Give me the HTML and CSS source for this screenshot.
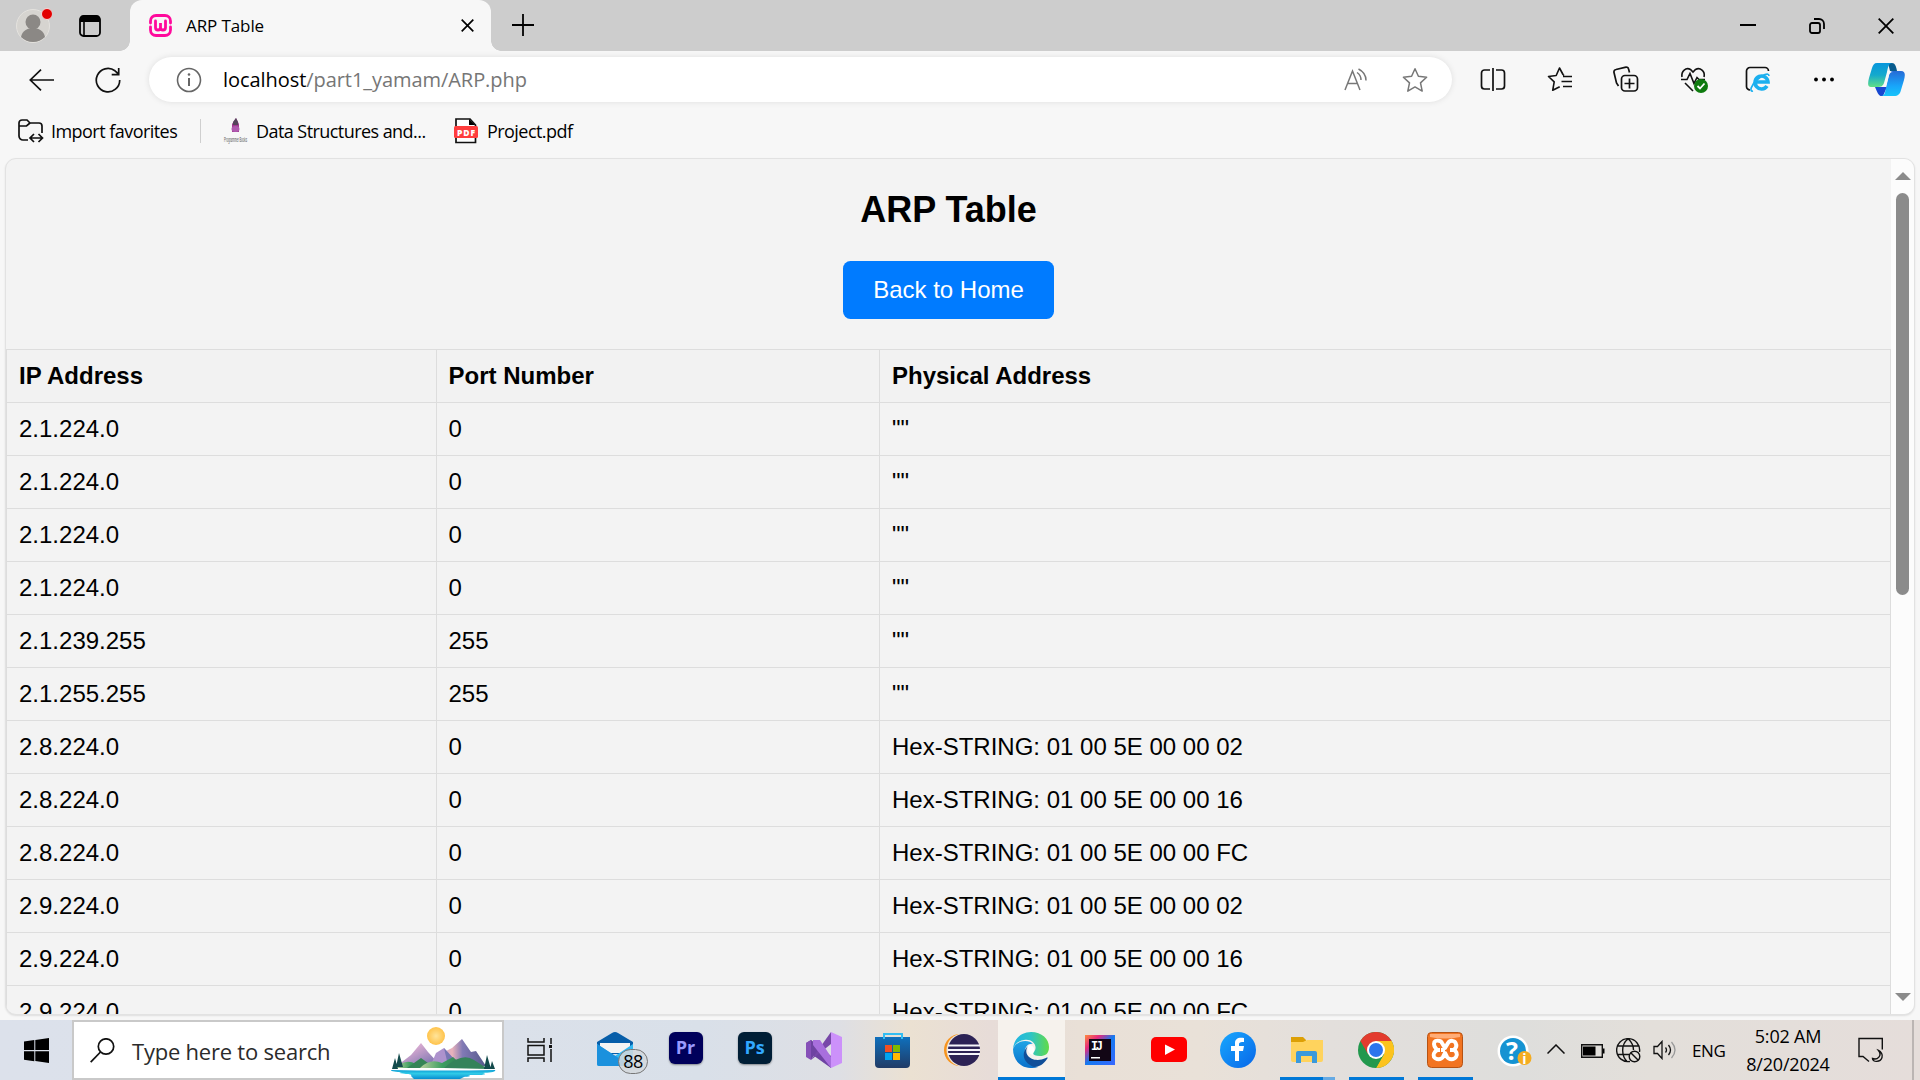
FILE: index.html
```
<!DOCTYPE html>
<html lang="en">
<head>
<meta charset="utf-8">
<title>ARP Table</title>
<link rel="stylesheet" href="styles.css">
</head>
<body>
<div class="screen">
  <header class="titlebar">
    <svg class="profile" width="36" height="38" viewBox="0 0 36 38"><circle cx="17" cy="20" r="16.5" fill="#d6d4d0" stroke="#e4e2de"/><circle cx="17" cy="16" r="7.5" fill="#8b8885"/><path d="M5 31c2-12 22-12 24 0a17 17 0 0 1-24 0z" fill="#8b8885"/><circle cx="31" cy="8" r="5.5" fill="#e30000" stroke="#f3dada"/></svg>
    <svg class="tabactions" width="22" height="22" viewBox="0 0 22 22"><rect x="1" y="1" width="20" height="20" rx="3.5" fill="none" stroke="#000" stroke-width="1.8"/><path d="M1 7V4a3 3 0 0 1 3-3h14a3 3 0 0 1 3 3v3z"/><path d="M5 7v14" stroke="#000" stroke-width="1.6"/></svg>
    <div class="tab">
      <svg width="23" height="23" viewBox="0 0 23 23" fill="none" stroke="#ff0a9c" stroke-linecap="round"><path d="M1.500 9V7a5.500 5.500 0 0 1 5.500-5.500h9A5.500 5.500 0 0 1 21.500 7v2M1.500 13v3A5.500 5.500 0 0 0 7 21.500h9a5.500 5.500 0 0 0 5.500-5.500v-3" stroke-width="2.800"/><path d="M6.500 7v6.500a2.500 2.500 0 0 0 5 0V9v4.500a2.500 2.500 0 0 0 5 0V7" stroke-width="2.800"/></svg>
      <span class="tab-title">ARP Table</span>
      <svg width="13" height="13" viewBox="0 0 13 13" stroke="#000" stroke-width="1.7"><path d="M.7.7l11.600 11.600M12.300.7L.7 12.300"/></svg>
    </div>
    <svg class="newtab" width="22" height="22" viewBox="0 0 22 22" stroke="#000" stroke-width="1.8"><path d="M11 0v22M0 11h22"/></svg>
    <div class="window-buttons">
      <svg width="16" height="16" viewBox="0 0 16 16" stroke="#000" stroke-width="2"><path d="M0 7h16"/></svg>
      <svg width="16" height="16" viewBox="0 0 16 16" fill="none" stroke="#000" stroke-width="1.8"><rect x="1" y="5" width="10" height="10" rx="2"/><path d="M5 1h5a5 5 0 0 1 5 5v5"/></svg>
      <svg width="16" height="16" viewBox="0 0 16 16" stroke="#000" stroke-width="1.8"><path d="M.7.7l14.600 14.600M15.300.7L.7 15.300"/></svg>
    </div>
  </header>

  <nav class="toolbar">
    <svg class="back" width="25" height="22" viewBox="0 0 25 22" fill="none" stroke="#111" stroke-width="1.7"><path d="M25 11H1.500M12 .7L1.300 11 12 21.300"/></svg>
    <svg class="reload" width="26" height="26" viewBox="0 0 26 26" fill="none" stroke="#111" stroke-width="1.7"><path d="M24.700 13A11.700 11.700 0 1 1 20 3.800l3 2.700M23.700 1v6.700h-7"/></svg>
    <div class="address">
      <svg class="info" width="26" height="26" viewBox="0 0 26 26" fill="none" stroke="#666" stroke-width="1.6"><circle cx="13" cy="13" r="11.500"/><path d="M13 11v8" stroke-width="2"/><circle cx="13" cy="7.500" r="1.300" fill="#666" stroke="none"/></svg>
      <span class="url">localhost<span class="path">/part1_yamam/ARP.php</span></span>
      <svg class="read" width="24" height="24" viewBox="0 0 24 24" fill="none" stroke="#777" stroke-width="1.500"><path d="M1 22L8.500 3 16 22M3.800 15.500h9.600M13 4.500c3 2 4 4.500 4 7.500M14.500 1c5 2.500 7.500 6.500 7.500 11.500"/></svg>
      <svg class="star" width="26" height="26" viewBox="0 0 26 26" fill="none" stroke="#777" stroke-width="1.500" stroke-linejoin="round"><path d="M13 1.700l3.400 7.600 8.200 1-6.100 5.600 1.700 8.200-7.200-4.200-7.200 4.200 1.700-8.200-6.100-5.600 8.200-1z"/></svg>
    </div>
    <div class="tools">
      <svg width="26" height="28" viewBox="0 0 26 28" fill="none" stroke="#111" stroke-width="1.700"><path d="M10 4H4.500A3 3 0 0 0 1.500 7v13a3 3 0 0 0 3 3H10M16 4h5.500a3 3 0 0 1 3 3v13a3 3 0 0 1-3 3H16M13 2v23"/></svg>
      <svg width="26" height="28" viewBox="0 0 26 28" fill="none" stroke="#111" stroke-width="1.600" stroke-linejoin="round"><path d="M17 9.500l-1-1L12.500 2 9.200 9.500l-7.700 1 5.700 5.300-1.500 8.500 7-3.500M16 10.500h9M14.500 15.500H25M16 20.500h9"/></svg>
      <svg width="26" height="28" viewBox="0 0 26 28" fill="none" stroke="#111" stroke-width="1.700"><rect x="8.500" y="9.500" width="16" height="15.500" rx="3.500"/><path d="M16.500 12.500v10M11.500 17.500h10M5.500 20L3.500 17 1 6.500a2.500 2.500 0 0 1 2-3L13 1.200a2 2 0 0 1 2.500 1.500l1 3.800"/></svg>
      <svg class="heart" width="28" height="28" viewBox="0 0 28 28" fill="none" stroke="#111" stroke-width="1.600"><path d="M2 11C1 5 6 1 10.500 3.500L13 6l2.500-2.500C20 1 25.500 5 24 11M1 13.500h6l3-6 4 10 3-6 2 2h6M5 17l8 8"/><circle cx="21" cy="20" r="7" fill="#0f7b0f" stroke="none"/><path d="M17.500 20l2.500 2.500 4.500-5" stroke="#fff" stroke-width="1.800"/></svg>
      <svg class="ie" width="26" height="28" viewBox="0 0 26 28" fill="none"><path d="M5 24a3.500 3.500 0 0 1-3.500-3.500V5A3.500 3.500 0 0 1 5 1.500h15A3.500 3.500 0 0 1 23.500 5" stroke="#111" stroke-width="1.700"/><path d="M22 20a6.500 6.500 0 1 1 1-4H10" stroke="#1cb0ef" stroke-width="3.600"/><path d="M8 25c-4 1-2-6 4-11 5-5 12-8 12-4" stroke="#1cb0ef" stroke-width="1.700"/></svg>
      <svg width="26" height="28" viewBox="0 0 26 28"><circle cx="5" cy="13.500" r="1.900"/><circle cx="13" cy="13.500" r="1.900"/><circle cx="21" cy="13.500" r="1.900"/></svg>
    </div>
    <svg class="copilot" width="37" height="33" viewBox="0 0 37 33">
      <defs><linearGradient id="cp1" x2="0" y2="1"><stop stop-color="#0796dc"/><stop offset=".5" stop-color="#14a9cd"/><stop offset="1" stop-color="#61df87"/></linearGradient><linearGradient id="cp2" x2="0" y2="1"><stop stop-color="#266bd6"/><stop offset=".6" stop-color="#18a5fa"/><stop offset="1" stop-color="#17c4fa"/></linearGradient></defs>
      <path d="M20 0h4c3 0 4 3 5 8h-7z" fill="#075a8c"/><path d="M7 24h12l-4 9c-4 1-5-2-8-9z" fill="#1747d1"/>
      <path d="M9 0h16c-5 0-5 5-6 9l-3 11c-1 3-3 4-6 4H3c-4 0-3-5-2-9L4 5c1-3 2-5 5-5z" fill="url(#cp1)"/><path d="M25 8h8c5 0 4 5 3 9l-3 10c-1 4-3 6-7 6H13c4 0 4-4 5-8l3-13c1-3 2-4 4-4z" fill="url(#cp2)"/>
      <path d="M23 9h2c-3 0-4 2-4.500 5l-2.500 9h-4c2-1 2.500-2 3-4l2-7c.8-2.500 2-3 4-3z" fill="#f7f7f7"/>
    </svg>
  </nav>

  <nav class="favorites">
    <svg class="import" width="26" height="24" viewBox="0 0 26 24" fill="none" stroke="#111" stroke-width="1.700"><path d="M10 21H5a4 4 0 0 1-4-4V4a3 3 0 0 1 3-3h5l3 3h9a3 3 0 0 1 3 3v7M1 7h7.500L12 4M12 19h12M16 15l-4 4 4 4M20.500 15l4 4-4 4"/></svg>
    <span class="fav-import">Import favorites</span>
    <i class="divider"></i>
    <svg class="pen" width="26" height="26" viewBox="0 0 26 26"><path d="M9 6l4-6 3 6v8H9z" fill="#9e3b90"/><path d="M10 4l3-4 2 4v3h-5z" fill="#54445a"/><ellipse cx="12.500" cy="11" rx="4" ry="3" fill="#b05aaf"/><text x="1" y="23.500" font-family="Liberation Sans" font-size="7.500" textLength="23" lengthAdjust="spacingAndGlyphs" fill="#555">Programmer Books</text></svg>
    <span class="fav-data">Data Structures and...</span>
    <svg class="pdf" width="24" height="26" viewBox="0 0 24 26"><path d="M2 24.500V1h14l5.500 6v17.500z" fill="#fff" stroke="#111" stroke-width="1.700"/><path d="M15 1v6h6z"/><rect y="8" width="24" height="12" rx="1.500" fill="#ff3d3d"/><text x="12" y="17.500" text-anchor="middle" font-family="Open Sans" font-weight="800" font-size="8.500" textLength="18" fill="#fff">PDF</text></svg>
    <span class="fav-project">Project.pdf</span>
  </nav>

  <div class="viewport">
    <main class="page">
      <h1>ARP Table</h1>
      <a class="home">Back to Home</a>
      <table>
        <colgroup><col class="c-ip"><col class="c-port"><col></colgroup>
        <tr><th>IP Address</th><th>Port Number</th><th>Physical Address</th></tr>
        <tr><td>2.1.224.0</td><td>0</td><td>""</td></tr>
        <tr><td>2.1.224.0</td><td>0</td><td>""</td></tr>
        <tr><td>2.1.224.0</td><td>0</td><td>""</td></tr>
        <tr><td>2.1.224.0</td><td>0</td><td>""</td></tr>
        <tr><td>2.1.239.255</td><td>255</td><td>""</td></tr>
        <tr><td>2.1.255.255</td><td>255</td><td>""</td></tr>
        <tr><td>2.8.224.0</td><td>0</td><td>Hex-STRING: 01 00 5E 00 00 02</td></tr>
        <tr><td>2.8.224.0</td><td>0</td><td>Hex-STRING: 01 00 5E 00 00 16</td></tr>
        <tr><td>2.8.224.0</td><td>0</td><td>Hex-STRING: 01 00 5E 00 00 FC</td></tr>
        <tr><td>2.9.224.0</td><td>0</td><td>Hex-STRING: 01 00 5E 00 00 02</td></tr>
        <tr><td>2.9.224.0</td><td>0</td><td>Hex-STRING: 01 00 5E 00 00 16</td></tr>
        <tr><td>2.9.224.0</td><td>0</td><td>Hex-STRING: 01 00 5E 00 00 FC</td></tr>
      </table>
    </main>
    <div class="scrollbar">
      <svg width="16" height="8" viewBox="0 0 16 8" fill="#8b8b8b"><path d="M8 0l8 8H0z"/></svg>
      <i class="thumb"></i>
      <svg class="down" width="16" height="8" viewBox="0 0 16 8" fill="#8b8b8b"><path d="M8 8l8-8H0z"/></svg>
    </div>
  </div>

  <footer class="taskbar">
    <div class="start"><svg width="25" height="25" viewBox="0 0 25 25"><path d="M0 3.600l10.300-1.500v10H0zM11.300 2L25 0v12H11.300zM0 13.200h10.300v10L0 21.700zM11.300 13.200H25V25l-13.700-2z"/></svg></div>
    <div class="search">
      <svg class="lens" width="25" height="25" viewBox="0 0 25 25" fill="none" stroke="#111" stroke-width="1.700"><circle cx="16" cy="8.500" r="7.700"/><path d="M10.500 14L.7 24.200"/></svg>
      <span class="search-text">Type here to search</span>
      <svg class="scene" width="106" height="52" viewBox="0 0 106 52">
        <defs><linearGradient id="m1" x2="1" y2="1"><stop offset=".3" stop-color="#d7aad0"/><stop offset="1" stop-color="#6c6bab"/></linearGradient><linearGradient id="m2" x2="1"><stop stop-color="#c7aadb"/><stop offset=".35" stop-color="#e8b2bb"/><stop offset=".55" stop-color="#8179b5"/><stop offset="1" stop-color="#555a8a"/></linearGradient><linearGradient id="lake" x2="0" y2="1"><stop stop-color="#0c9fd5"/><stop offset=".4" stop-color="#30cbe8"/><stop offset="1" stop-color="#078dd0"/></linearGradient><linearGradient id="hill" x2="1"><stop stop-color="#b8ce9c"/><stop offset=".5" stop-color="#3c9e60"/><stop offset="1" stop-color="#327752"/></linearGradient><radialGradient id="sun"><stop stop-color="#ffe49a"/><stop offset="1" stop-color="#ffc34b"/></radialGradient></defs>
        <circle cx="46" cy="9" r="9" fill="url(#sun)"/>
        <path d="M8 38l13-10 10-12 7 9 12 13z" fill="url(#m1)"/><path d="M44 39l12-15 6-3 10-9 9 13 5-1 10 15z" fill="url(#m2)"/><path d="M40 40l6-14 8-5 10 11 5 8z" fill="#ad92cd"/><path d="M54 21l10 11 5 8-12-6z" fill="#7775b3"/>
        <path d="M6 41q9-10 20-4l8 4z" fill="url(#hill)"/><path d="M17 41l14-10 14 10z" fill="#358456"/><path d="M30 41q10-10 22-5l11-6 12 11z" fill="url(#hill)"/><path d="M54 41q18-16 30-8l14 9z" fill="#35835a"/>
        <path d="M5 31l3 11H2zM9 26l4 14H6zM97 28l4 14h-7zM102 34l3 8h-5z" fill="#134b4c"/>
        <path d="M1 43q52 1 104 0c2 2-6 3-12 3 4 1 2 2-7 2h-8c5 1 0 2-4 2l-4 2H24l-3-3c1-1 0-2-5-2-8-1-8-1-4-2-6 0-12-1-11-2z" fill="url(#lake)"/>
      </svg>
    </div>
    <div class="taskview"><svg width="25" height="24" viewBox="0 0 25 24" fill="none" stroke="#111" stroke-width="1.500"><path d="M1 0v4h16V0M1 24v-4h16v4M1 7.500h16v9.500H1zM24 0v6M24 11v13"/><path d="M22 7h3v3h-3z" fill="#111" stroke="none"/></svg></div>
    <div class="apps">
      <div class="app mail">
        <svg width="36" height="36" viewBox="0 0 36 36"><path d="M0 10L15 1q3-2 6 0l15 9v12H0z" fill="#075ea9"/><path d="M3 11h30v10H3z" fill="#f4f4f4"/><path d="M0 12l18 12 18-12v20a2 2 0 0 1-2 2H2a2 2 0 0 1-2-2z" fill="#31b8f2"/><path d="M0 12l34 22H2a2 2 0 0 1-2-2z" fill="#1b91dd"/></svg>
        <span class="badge">88</span>
      </div>
      <div class="app nudge"><span class="adobe pr">Pr</span></div>
      <div class="app nudge"><span class="adobe ps">Ps</span></div>
      <div class="app nudge"><svg width="36" height="36" viewBox="0 0 36 36"><path d="M0 11l5-3 20 16v12L4 21l-4 4z" fill="#6e43a2"/><path d="M5 28L25 0v12L5 28z" fill="#7748a8"/><path d="M0 11l5-3v20l-5-3z" fill="#8650b8"/><path d="M5 8l4 5v9l-4 6z" fill="#6e43a2"/><path d="M7 8h7l11 17v11L7 13z" fill="#a86fdd"/><path d="M25 0l11 5v26l-11 5z" fill="#cc91fa"/></svg></div>
      <div class="app nudge"><svg width="36" height="36" viewBox="0 0 36 36"><defs><linearGradient id="store" x2="0" y2="1"><stop stop-color="#0f70bd"/><stop offset="1" stop-color="#203b66"/></linearGradient></defs><path d="M0 5h35v27a4 4 0 0 1-4 4H4a4 4 0 0 1-4-4z" fill="url(#store)"/><path d="M10 13h7v7h-7z" fill="#f25022"/><path d="M18 13h7v7h-7z" fill="#7fba00"/><path d="M10 21h7v7h-7z" fill="#00a4ef"/><path d="M18 21h7v7h-7z" fill="#ffb900"/><path d="M9 7V2h18v5" fill="none" stroke="#32bdf2" stroke-width="2"/></svg></div>
      <div class="app nudge"><svg width="36" height="36" viewBox="0 0 36 36"><circle cx="16" cy="18" r="16" fill="#f7941e"/><circle cx="19" cy="18" r="16.500" fill="#e9e2db"/><circle cx="20" cy="18" r="16" fill="#2c2255"/><path d="M4 13.500h32M3.500 18H36M4 22h32" stroke="#f5f5fa" stroke-width="2"/></svg></div>
      <div class="app active"><svg width="36" height="36" viewBox="0 0 36 36"><defs><linearGradient id="e1"><stop stop-color="#1fb5e6"/><stop offset=".5" stop-color="#2ec4c5"/><stop offset="1" stop-color="#62db47"/></linearGradient><linearGradient id="e2" x2="0" y2="1"><stop stop-color="#1fa4e5"/><stop offset="1" stop-color="#0870cb"/></linearGradient></defs><path d="M0 17C1 6 9 0 18 0c11 0 18 7 18 15 0 7-4 9-9 9-6 0-8-2-6-4 5-7-3-14-10-12-6 1-9 4-11 9z" fill="url(#e1)"/><path d="M0 17C3 8 16 7 20 12c-5-1-9 4-8 9 1 9 9 13 13 14C12 39 0 31 0 17z" fill="url(#e2)"/><path d="M15 14c-6 9 5 18 18 12 2-1 2 0 1 1-3 5-8 8-13 8-10-4-14-13-6-21z" fill="#104f99"/><path d="M15 14c3-2 7 1 6 5 0 1-2 2-1 4-4-1-6-5-5-9z" fill="#fff"/></svg></div>
      <div class="app nudge"><svg width="30" height="30" viewBox="0 0 30 30"><defs><linearGradient id="ij" x2="1" y2="1"><stop stop-color="#ff8a3c"/><stop offset=".25" stop-color="#e52a7d"/><stop offset=".5" stop-color="#1479ef"/><stop offset="1" stop-color="#3867ff"/></linearGradient></defs><path d="M0 0h30v30H0z" fill="url(#ij)"/><path d="M4 4h22v22H4z" fill="#120615"/><path d="M6 22h9v1.500H6z" fill="#fff"/><text x="6" y="15" font-family="Liberation Mono" font-weight="700" font-size="12" textLength="12" fill="#fff">IJ</text></svg></div>
      <div class="app nudge"><svg width="36" height="26" viewBox="0 0 36 26"><rect width="36" height="25" rx="5" fill="#f00"/><path d="M14 7.500l10 5-10 5.500z" fill="#fff"/></svg></div>
      <div class="app nudge"><svg width="36" height="36" viewBox="0 0 36 36"><defs><linearGradient id="fb" x2="1" y2="1"><stop stop-color="#18a8fe"/><stop offset="1" stop-color="#0866e8"/></linearGradient></defs><circle cx="18" cy="18" r="18" fill="url(#fb)"/><path d="M15 29V19h-4v-5h4v-3c0-4 3-6 9-5v4h-2c-2 0-3 1-3 2v2h5l-1 5h-4v10z" fill="#fff"/></svg></div>
      <div class="app open more nudge"><svg width="32" height="28" viewBox="0 0 32 28"><path d="M0 1h12l3 3v8H0z" fill="#dda006"/><path d="M0 6h12l4-2h16v20a2 2 0 0 1-2 2H2a2 2 0 0 1-2-2z" fill="#ffd35d"/><path d="M5 27V17q0-2 2-2h17q2 0 2 2v10h-5v-7H10v7z" fill="#3a99dc"/></svg></div>
      <div class="app open nudge"><svg width="36" height="36" viewBox="0 0 36 36"><circle cx="18" cy="18" r="18" fill="#22984d"/><path d="M2.400 9A18 18 0 0 1 33.600 9L18 18z" fill="#e33b2e"/><path d="M18 36A18 18 0 0 0 33.600 9H18l8 13z" fill="#fcc31e"/><path d="M2.400 9L10 22l8-13z" fill="#e33b2e"/><path d="M10 22l8 14 8-14z" fill="#22984d"/><circle cx="18" cy="18" r="9" fill="#fff"/><circle cx="18" cy="18" r="7" fill="#2d75ed"/></svg></div>
      <div class="app open nudge"><svg width="36" height="36" viewBox="0 0 36 36"><rect x=".5" y=".5" width="35" height="35" rx="4" fill="#f27421" stroke="#b65314"/><path d="M3 2h30v3q-15 3-30 0z" fill="#ffad77"/><path d="M13 18H9M18 18h-4M27 18h-4M13 9c-4-1-6 0-6 3s2 4 3 6c-3 2-4 5-3 7 2 3 7 3 9 0l2-4 2 4c2 3 7 3 9 0 2-3 0-6-2-7 2-2 3-4 2-6-1-4-6-4-8-1l-3 5-3-5c-1-2-1-2-2-2z" fill="none" stroke="#fff" stroke-width="4" stroke-linejoin="round"/></svg></div>
    </div>
    <div class="tray">
      <svg class="help" width="35" height="33" viewBox="0 0 35 33"><circle cx="16" cy="16" r="15.500" fill="#fff"/><circle cx="16" cy="16" r="13" fill="#1593d2"/><text x="15" y="25" text-anchor="middle" font-family="Open Sans" font-weight="700" font-size="25" fill="#fff">?</text><circle cx="27.500" cy="23" r="7" fill="#f4ac20"/><text x="27.500" y="28.500" text-anchor="middle" font-family="Open Sans" font-weight="700" font-size="14" fill="#fff">i</text></svg>
      <svg class="caret" width="18" height="10" viewBox="0 0 18 10" fill="none" stroke="#111" stroke-width="1.500"><path d="M.5 9.500L9 1l8.500 8.500"/></svg>
      <svg class="battery" width="24" height="14" viewBox="0 0 24 14"><path d="M.7.7h20.600v12.600H.7z" fill="none" stroke="#111" stroke-width="1.400"/><path d="M2 2.500h12.500v9H2zM22 4.500h1.500v5H22z"/></svg>
      <svg class="globe" width="25" height="25" viewBox="0 0 25 25" fill="none" stroke="#111" stroke-width="1.400"><path d="M14 23.500A11.500 11.500 0 1 1 23.500 14M1.500 8h22M1.500 16.500H13M12 1C5 6 5 18 11.500 24M12.500 1c4 4 5 7 5 11"/><circle cx="18.500" cy="18.500" r="5.300"/><path d="M15 15l7 7"/></svg>
      <svg class="volume" width="24" height="20" viewBox="0 0 24 20" fill="none" stroke="#111" stroke-width="1.300"><path d="M1 6.500h3.500L9 1.500v17l-4.500-5H1zM12.500 7.500q2 2.500 0 5M15.500 5q4 5 0 10"/><path d="M18.500 2q7 8 0 16" stroke="#999"/></svg>
      <span class="lang">ENG</span>
      <div class="clock"><span class="time">5:02 AM</span><span class="date">8/20/2024</span></div>
      <svg class="notice" width="26" height="26" viewBox="0 0 26 26" fill="none" stroke="#111" stroke-width="1.400"><path d="M24.300 12.500V1.500H1v18h4l6 5M20.500 13.500c4 5-1 10-6 8 0 4 8 4 9.500-1 1-3-1-6-3.500-7z"/></svg>
      <i class="edge"></i>
    </div>
  </footer>
</div>
</body>
</html>
```
FILE: styles.css
```
* { box-sizing: border-box; }
body { margin: 0; font-family: "Open Sans", sans-serif; color: #000; }
svg { display: block; flex: none; }
span { white-space: nowrap; }
.screen { width: 1920px; height: 1080px; overflow: hidden; background: #f7f7f7; display: flex; flex-direction: column; }

.titlebar { height: 51px; flex: none; display: flex; align-items: flex-start; background: #cdcdcd; }
.profile { margin: 6px 0 0 16px; }
.tabactions { margin: 15px 0 0 27px; }
.tab { position: relative; width: 361px; height: 51px; margin-left: 29px; padding: 0 17px 0 19px; display: flex; align-items: center; background: #f7f7f7; border-radius: 12px 12px 0 0; }
.tab::before, .tab::after { content: ""; position: absolute; bottom: 0; width: 10px; height: 10px; }
.tab::before { left: -10px; background: radial-gradient(circle at 0 0, #cdcdcd 9.500px, #f7f7f7 10px); }
.tab::after { right: -10px; background: radial-gradient(circle at 100% 0, #cdcdcd 9.500px, #f7f7f7 10px); }
.tab-title { flex: 1; margin-left: 14px; font-size: 17px; letter-spacing: -.1px; }
.newtab { margin: 14px 0 0 21px; }
.window-buttons { display: flex; gap: 53px; margin: 18px 26px 0 auto; }

.toolbar { height: 57px; flex: none; display: flex; align-items: center; }
.back { margin-left: 29px; }
.reload { margin-left: 41px; }
.address { display: flex; align-items: center; width: 1303px; height: 45px; margin-left: 28px; padding-left: 27px; background: #fff; border-radius: 23px; box-shadow: 0 0 6px #0000001a; }
.url { flex: 1; margin-left: 21px; font-size: 20px; letter-spacing: -.06px; }
.path { color: #767676; }
.read { margin-right: 34px; }
.star { margin-right: 24px; }
.tools { display: flex; gap: 40.500px; margin-left: 28px; }
.heart { margin-right: -3px; }
.ie { margin-right: -1px; }
.copilot { margin-left: auto; margin-right: 15px; }

.favorites { height: 50px; flex: none; display: flex; align-items: center; padding-bottom: 5px; font-size: 18px; }
.import { margin-left: 18px; }
.fav-import { width: 149px; margin-left: 7px; letter-spacing: -.54px; }
.divider { width: 1px; height: 24px; background: #cfcfcf; }
.pen { margin-left: 22px; }
.fav-data { width: 190px; margin-left: 7px; letter-spacing: -.56px; }
.pdf { margin-left: 8px; }
.fav-project { margin-left: 9px; letter-spacing: -.55px; }

.viewport { display: flex; width: 1910px; height: 857px; flex: none; margin-left: 5px; border: 1px solid #e2e2e2; border-radius: 11px; overflow: hidden; background: #f3f3f3; box-shadow: 0 1px 2px #0000001a; }
.page { flex: 1; height: 855px; overflow: hidden; text-align: center; font: 24px/28px "Liberation Sans", Arial, sans-serif; }
.page h1 { margin: 30px 0 31px; font-size: 36px; line-height: 41px; }
.home { display: inline-block; margin-bottom: 30px; padding: 15px 30px; background: #007bff; color: #fff; border-radius: 7.500px; vertical-align: top; }
.page table { width: 100%; border-collapse: collapse; table-layout: fixed; text-align: left; }
.page tr { height: 53px; }
.page th, .page td { padding: 0 12px; border: 1px solid #ddd; }
.page th { background: #f2f2f2; }
.c-ip { width: 429.500px; }
.c-port { width: 443.500px; }
.scrollbar { width: 23px; display: flex; flex-direction: column; align-items: center; padding: 13px 0; background: #fcfcfc; }
.thumb { width: 13px; height: 402px; margin-top: 13px; border-radius: 7px; background: #8b8b8b; }
.down { margin-top: auto; }

.taskbar { height: 60px; flex: none; margin-top: auto; display: flex; background: linear-gradient(90deg, #dce1eb 0, #dbe1ea 500px, #d9e0e9 700px, #dedfe4 840px, #ebe1d2 910px, #e7dcd8 990px, #e9e0d7 1080px, #e9e1d8 1200px, #e3dfdc 1330px, #dededc 1520px, #e3dfda 1650px, #e5ddda 1920px); }
.start { width: 72px; padding: 18px 0 0 24px; }
.search { width: 432px; display: flex; border: 2px solid #c9c9c9; background: #fff; }
.lens { margin: 16px 0 0 16px; }
.search-text { flex: 1; margin: 12px 0 0 17px; font-size: 22px; line-height: 34px; letter-spacing: -.22px; color: #2b2b2b; }
.scene { margin: 5px 6px 0 0; }
.taskview { width: 80px; padding: 18px 0 0 23px; }
.apps { display: flex; gap: 2px; }
.app { position: relative; width: 67px; display: flex; align-items: center; justify-content: center; }
.nudge { padding-right: 2px; }
.mail { padding-right: 5px; }
.active { background: #f6f2ed; box-shadow: inset 0 -3px #0078d7; padding-right: 1px; }
.open { background: linear-gradient(#0078d7, #0078d7) center bottom / 55px 3px no-repeat; }
.more { background: linear-gradient(90deg, #0078d7 43px, #66aae4 43px) center bottom / 55px 3px no-repeat; }
.badge { position: absolute; left: 34px; top: 29px; width: 30px; height: 25px; border: 1px solid #777; border-radius: 13px; background: #d3d8dcdd; font-size: 18px; line-height: 23px; letter-spacing: -.6px; text-align: center; }
.adobe { width: 34px; height: 32px; margin-bottom: 4px; border-radius: 6px; box-shadow: 0 1px 2px #0006; font-weight: 700; font-size: 18px; line-height: 30px; text-align: center; }
.pr { background: #00005b; color: #9999ff; }
.ps { background: #001e36; color: #31a8ff; }
.tray { flex: 1; display: flex; align-items: center; }
.help { margin: 2px 0 0 18px; }
.caret { margin: -2px 0 0 15px; }
.battery { margin: 2px 0 0 16px; }
.globe { margin-left: 11px; }
.volume { margin-left: 12px; }
.lang { width: 36px; margin-left: 15px; font-size: 17px; letter-spacing: -.4px; }
.clock { display: flex; flex-direction: column; width: 100px; margin-left: 10px; text-align: center; font-size: 18px; line-height: 28px; letter-spacing: -.2px; }
.notice { margin-left: 20px; }
.edge { width: 2px; height: 60px; margin-left: auto; margin-right: 6px; background: #bbb5b3; }
```
